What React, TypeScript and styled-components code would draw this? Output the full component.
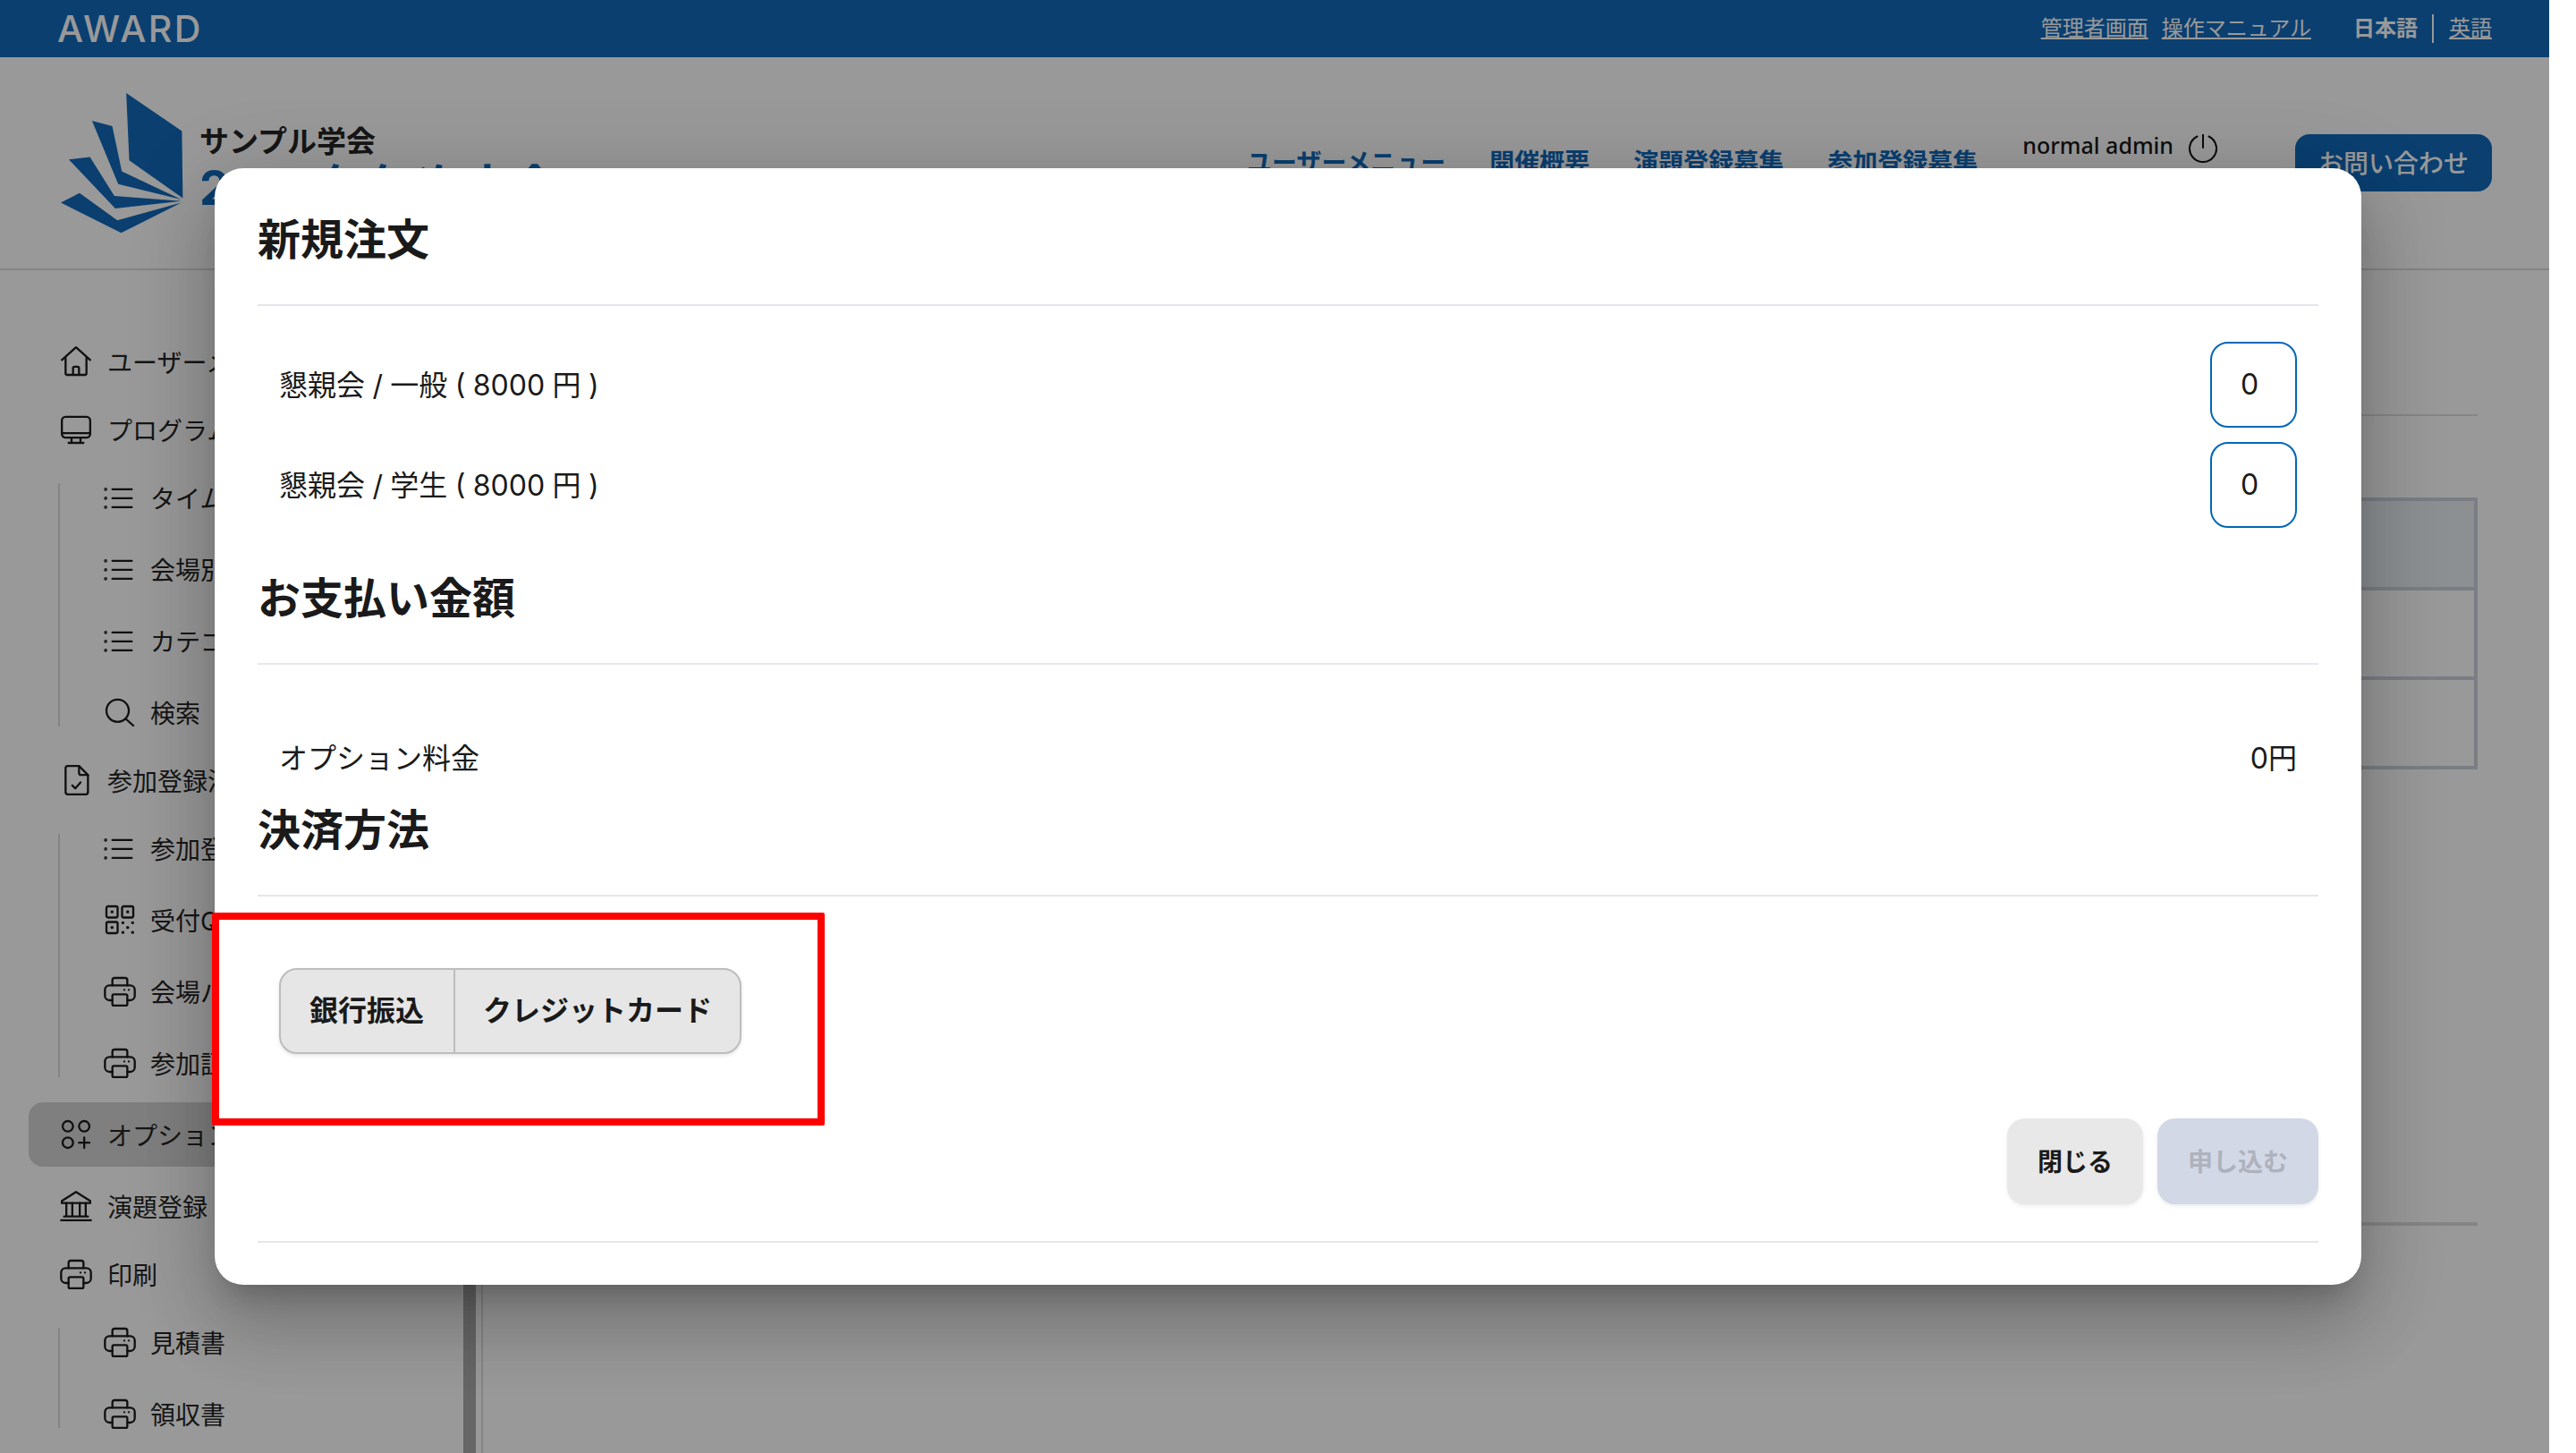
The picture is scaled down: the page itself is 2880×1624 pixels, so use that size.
import styled, { createGlobalStyle } from 'styled-components';

const FONT = `"Inter", "Noto Sans CJK JP", sans-serif`;
const BLUE = '#1169bb';
const INK = '#262626';

const GlobalStyle = createGlobalStyle`
  html, body {
    margin: 0;
    padding: 0;
    background: #fff;
    overflow: hidden;
  }
  * { box-sizing: border-box; }
`;

const Page = styled.div`
  position: relative;
  width: 2850px;
  height: 1624px;
  overflow: hidden;
  background: #fff;
  color: ${INK};
  font-family: ${FONT};
  display: flex;
  flex-direction: column;
`;

const TopBar = styled.div`
  height: 64px;
  background: ${BLUE};
  display: flex;
  align-items: center;
  padding: 0 64px;
  color: #fff;
  flex-shrink: 0;
`;

const Brand = styled.div`
  font-family: "Inter", sans-serif;
  font-size: 41px;
  line-height: 1;
  font-weight: 500;
  letter-spacing: 2.5px;
`;

const TopLinks = styled.div`
  margin-left: auto;
  display: flex;
  align-items: center;
  font-size: 24px;
  line-height: 32px;
`;

const TopLink = styled.a`
  color: #fff;
  text-decoration: underline;
  margin-right: 15px;
  &:last-child { margin-right: 0; }
`;

const LangGroup = styled.div`
  display: flex;
  align-items: center;
  margin-left: 32px;
`;

const LangCurrent = styled.span`
  font-weight: 700;
  padding-right: 16px;
  border-right: 2px solid #fff;
  margin-right: 17px;
`;

const SiteHeader = styled.header`
  height: 238px;
  flex-shrink: 0;
  display: flex;
  padding: 0 64px 0 66px;
  border-bottom: 2px solid #dcdcdc;
`;

const LogoMark = styled.svg`
  width: 142px;
  height: 163px;
  margin-top: 36px;
  flex-shrink: 0;
`;

const SiteTitle = styled.div`
  margin: 74px 0 0 15px;
  display: flex;
  flex-direction: column;
`;

const SiteOrg = styled.div`
  font-size: 33px;
  line-height: 40px;
  font-weight: 700;
`;

const SiteEvent = styled.div`
  font-size: 53px;
  line-height: 64px;
  font-weight: 700;
  color: ${BLUE};
  white-space: nowrap;
`;

const HeaderRight = styled.div`
  margin-left: auto;
  display: flex;
  align-items: flex-start;
  padding-top: 86px;
`;

const MainNav = styled.nav`
  display: flex;
  gap: 49px;
  margin: 16px 50px 0 0;
`;

const NavLink = styled.a`
  font-size: 28px;
  line-height: 32px;
  font-weight: 700;
  color: ${BLUE};
`;

const UserBox = styled.div`
  display: flex;
  align-items: center;
  gap: 16px;
  margin-right: 86px;
  height: 32px;
`;

const UserName = styled.span`
  font-family: "Noto Sans", sans-serif;
  font-size: 25px;
  line-height: 32px;
  font-weight: 500;
  color: #1a1a1a;
  padding-bottom: 8px;
`;

const PowerIcon = styled.svg`
  width: 34px;
  height: 32px;
`;

const ContactButton = styled.button`
  width: 220px;
  height: 64px;
  border: none;
  border-radius: 16px;
  background: ${BLUE};
  color: #fff;
  font-family: ${FONT};
  font-size: 28px;
  font-weight: 500;
  padding: 0 0 3px;
`;

const Body = styled.div`
  flex: 1;
  display: flex;
  min-height: 0;
`;

const Sidebar = styled.aside`
  width: 540px;
  flex-shrink: 0;
  display: flex;
  border-right: 2px solid #dedede;
  padding-right: 6px;
`;

const SideNav = styled.nav`
  flex: 1;
  display: flex;
  flex-direction: column;
  padding: 66px 0 0 32px;
`;

const Thumb = styled.div`
  width: 14px;
  background: #aaa;
  flex-shrink: 0;
`;

const SideItem = styled.div<{ $open?: boolean; $active?: boolean }>`
  height: 72px;
  flex-shrink: 0;
  display: flex;
  align-items: center;
  gap: 15px;
  padding-left: 33px;
  margin-right: ${({ $active }) => ($active ? '-40px' : '0')};
  margin-top: ${({ $active }) => ($active ? '4px' : '0')};
  margin-bottom: ${({ $open, $active }) => ($open ? '0' : $active ? '8px' : '4px')};
  border-radius: 16px;
  background: ${({ $active }) => ($active ? '#d4d4d4' : 'transparent')};
  font-size: 28px;
  white-space: nowrap;
`;

const SubList = styled.div`
  position: relative;
  display: flex;
  flex-direction: column;
  flex-shrink: 0;
  &::before {
    content: '';
    position: absolute;
    left: 33px;
    top: 24px;
    bottom: 24px;
    width: 2px;
    background: #dcdcdc;
  }
`;

const SubItem = styled.div`
  height: 80px;
  display: flex;
  align-items: center;
  gap: 14px;
  padding-left: 82px;
  font-size: 28px;
  white-space: nowrap;
`;

const Glyph = styled.svg.attrs({ viewBox: '0 0 24 24', fill: 'none', stroke: 'currentColor', strokeWidth: 1.4, strokeLinecap: 'round', strokeLinejoin: 'round' })`
  width: 40px;
  height: 40px;
  flex-shrink: 0;
  color: #1c1c1c;
`;

const Main = styled.main`
  flex: 1;
  display: flex;
  flex-direction: column;
  padding: 161px 80px 0 40px;
`;

const MainRule = styled.div`
  height: 2px;
  background: #dfdfdf;
`;

const InfoTable = styled.div`
  margin-top: 91px;
  height: 304px;
  border: 4px solid #cbd3dd;
  display: flex;
  flex-direction: column;
`;

const TableRow = styled.div<{ $head?: boolean }>`
  flex: 1;
  background: ${({ $head }) => ($head ? '#e9f0f5' : 'transparent')};
  border-bottom: 4px solid #cbd3dd;
  &:last-child { border-bottom: none; }
`;

const LowerRule = styled.div`
  margin-top: 506px;
  height: 4px;
  background: #dedede;
`;

const Overlay = styled.div`
  position: absolute;
  inset: 0;
  background: rgba(0, 0, 0, 0.4);
  padding: 188px 0 0 240px;
`;

const Dialog = styled.div`
  position: relative;
  width: 2400px;
  height: 1248px;
  padding: 44px 48px 0;
  background: #fff;
  border-radius: 32px;
  box-shadow: 0 22px 30px -14px rgba(0, 0, 0, 0.2), 0 48px 76px 6px rgba(0, 0, 0, 0.14), 0 18px 92px 16px rgba(0, 0, 0, 0.12);
  color: #1a1a1a;
  display: flex;
  flex-direction: column;
`;

const SectionTitle = styled.h2`
  margin: 0;
  font-size: 48px;
  line-height: 71px;
  font-weight: 700;
  padding-bottom: 37px;
  border-bottom: 2px solid #e6e6ec;
  color: #1a1a1a;
`;

const ItemList = styled.div`
  display: flex;
  flex-direction: column;
  gap: 16px;
  padding: 40px 24px 43px;
`;

const ItemRow = styled.div`
  display: flex;
  align-items: center;
  justify-content: space-between;
  font-size: 32px;
`;

const ItemLabel = styled.span`
  padding-bottom: 4px;
  word-spacing: -0.6px;
`;

const QtyInput = styled.input`
  width: 97px;
  height: 96px;
  padding: 0 0 2px 32px;
  border: 2px solid #0068b7;
  border-radius: 20px;
  background: #fff;
  font-family: ${FONT};
  font-size: 32px;
  color: #1a1a1a;
  outline: none;
`;

const TotalRow = styled.div`
  display: flex;
  justify-content: space-between;
  font-size: 32px;
  line-height: 48px;
  padding: 81px 24px 20px;
`;

const PayBlock = styled.div`
  padding: 80px 24px 0;
`;

const PayGroup = styled.div`
  display: inline-flex;
  height: 96px;
  border: 2px solid #bdbdbd;
  border-radius: 20px;
  background: #e6e6e6;
  box-shadow: 0 2px 4px rgba(0, 0, 0, 0.1);
`;

const PayOption = styled.button`
  border: none;
  background: none;
  padding: 0 33px 7px 32px;
  font-family: ${FONT};
  font-size: 32px;
  font-weight: 700;
  color: #1a1a1a;
  border-right: 2px solid #bdbdbd;
  &:last-child { border-right: none; padding: 0 31px 7px; }
`;

const Actions = styled.div`
  display: flex;
  justify-content: flex-end;
  gap: 16px;
  margin-top: 72px;
  padding-bottom: 41px;
  border-bottom: 2px solid #e6e6ec;
`;

const ActionButton = styled.button<{ $disabled?: boolean }>`
  height: 96px;
  padding: 0 34px 3px;
  border: none;
  border-radius: 20px;
  background: ${({ $disabled }) => ($disabled ? '#d3d8e7' : '#e8e8e8')};
  color: ${({ $disabled }) => ($disabled ? '#aeb2bd' : '#1a1a1a')};
  font-family: ${FONT};
  font-size: 28px;
  font-weight: 700;
  box-shadow: 0 2px 4px rgba(0, 0, 0, 0.08);
`;

const RedFrame = styled.div`
  position: absolute;
  left: -3px;
  top: 832px;
  width: 685px;
  height: 238px;
  border: 8px solid #ff0000;
  border-radius: 2px;
  pointer-events: none;
`;

const HomeIcon = () => (
  <Glyph>
    <path d="M2.500 11 12 2.500l9.500 8.500" />
    <path d="M5 9.500V20a1 1 0 0 0 1 1h12a1 1 0 0 0 1-1V9.500" />
    <path d="M10 21v-4.500a1 1 0 0 1 1-1h2a1 1 0 0 1 1 1V21" />
  </Glyph>
);

const MonitorIcon = () => (
  <Glyph>
    <rect x="2.500" y="3.500" width="19" height="14" rx="2.500" />
    <path d="M2.500 14.500h19M9 17.500V21M15 17.500V21M7 21h10" />
  </Glyph>
);

const ListIcon = () => (
  <Glyph>
    <path d="M7 6.500h13M7 12.500h13M7 18.500h13" />
    <circle cx="2.500" cy="6.500" r=".4" />
    <circle cx="2.500" cy="12.500" r=".4" />
    <circle cx="2.500" cy="18.500" r=".4" />
  </Glyph>
);

const SearchIcon = () => (
  <Glyph>
    <circle cx="10.500" cy="11" r="7.500" />
    <path d="m16 16.500 5 4.500" />
  </Glyph>
);

const FileCheckIcon = () => (
  <Glyph>
    <path d="M6.500 2.500H14l6 6V20a1.500 1.500 0 0 1-1.500 1.500h-12A1.500 1.500 0 0 1 5 20V4a1.500 1.500 0 0 1 1.500-1.500z" />
    <path d="M14 2.500V7a1.500 1.500 0 0 0 1.500 1.500H20" />
    <path d="m9.500 15.500 2 2 3.500-4" />
  </Glyph>
);

const QrIcon = () => (
  <Glyph>
    <rect x="3" y="3" width="7.500" height="7.500" rx="1" />
    <rect x="13.500" y="3" width="7.500" height="7.500" rx="1" />
    <rect x="3" y="13.500" width="7.500" height="7.500" rx="1" />
    <path d="M6.700 6.700h.1M17.200 6.700h.1M6.700 17.200h.1M14 14h.1M20.500 14h.1M17.200 17.200h.1M14 20.500h.1M20.500 20.500h.1" strokeWidth="2" />
  </Glyph>
);

const PrinterIcon = () => (
  <Glyph>
    <path d="M7 8V4.500A1.500 1.500 0 0 1 8.500 3h7A1.500 1.500 0 0 1 17 4.500V8" />
    <path d="M7 18H5a3 3 0 0 1-3-3v-4a3 3 0 0 1 3-3h14a3 3 0 0 1 3 3v4a3 3 0 0 1-3 3h-2" />
    <rect x="7" y="14" width="10" height="7.500" rx="1" />
    <path d="M15 11h.01M18 11h.01" />
  </Glyph>
);

const OptionsIcon = () => (
  <Glyph>
    <circle cx="6.500" cy="6.500" r="3.500" />
    <circle cx="17.500" cy="6.500" r="3.500" />
    <circle cx="6.500" cy="17.500" r="3.500" />
    <path d="M17.500 14v7M14 17.500h7" />
  </Glyph>
);

const BankIcon = () => (
  <Glyph>
    <path d="M12 2.500 2.500 8.500V10h19V8.500z" />
    <path d="M5.500 10v9M9.500 10v9M14.500 10v9M18.500 10v9M4 19h16M2 21.500h20" />
  </Glyph>
);

export default function App() {
  return (
    <Page>
      <GlobalStyle />
      <TopBar>
        <Brand>AWARD</Brand>
        <TopLinks>
          <TopLink>管理者画面</TopLink>
          <TopLink>操作マニュアル</TopLink>
          <LangGroup>
            <LangCurrent>日本語</LangCurrent>
            <TopLink>英語</TopLink>
          </LangGroup>
        </TopLinks>
      </TopBar>

      <SiteHeader>
        <LogoMark viewBox="80 60 425 490" fill="#1169bb">
          <polygon points="305,72 492,200 495,425 315,298" />
          <polygon points="190,165 258,183 290,335 490,430 278,378" />
          <polygon points="112,295 183,287 265,418 490,435 268,460" />
          <polygon points="85,440 148,408 275,500 490,440 288,542" />
        </LogoMark>
        <SiteTitle>
          <SiteOrg>サンプル学会</SiteOrg>
          <SiteEvent>2025年年次大会</SiteEvent>
        </SiteTitle>
        <HeaderRight>
          <MainNav>
            <NavLink>ユーザーメニュー</NavLink>
            <NavLink>開催概要</NavLink>
            <NavLink>演題登録募集</NavLink>
            <NavLink>参加登録募集</NavLink>
          </MainNav>
          <UserBox>
            <UserName>normal admin</UserName>
            <PowerIcon viewBox="0 0 34 32" fill="none" stroke="#111" strokeWidth="2" strokeLinecap="round">
              <path d="M10.500 2.500a15 15 0 1 0 13 0" />
              <path d="M17 .5V15" />
            </PowerIcon>
          </UserBox>
          <ContactButton>お問い合わせ</ContactButton>
        </HeaderRight>
      </SiteHeader>

      <Body>
        <Sidebar>
          <SideNav>
            <SideItem><HomeIcon />ユーザーメニュー</SideItem>
            <SideItem $open><MonitorIcon />プログラム</SideItem>
            <SubList>
              <SubItem><ListIcon />タイムテーブル</SubItem>
              <SubItem><ListIcon />会場別</SubItem>
              <SubItem><ListIcon />カテゴリー別</SubItem>
              <SubItem><SearchIcon />検索</SubItem>
            </SubList>
            <SideItem $open><FileCheckIcon />参加登録決済</SideItem>
            <SubList>
              <SubItem><ListIcon />参加登録</SubItem>
              <SubItem><QrIcon />受付QRコード</SubItem>
              <SubItem><PrinterIcon />会場パス</SubItem>
              <SubItem><PrinterIcon />参加証明書</SubItem>
            </SubList>
            <SideItem $active><OptionsIcon />オプション</SideItem>
            <SideItem><BankIcon />演題登録</SideItem>
            <SideItem $open><PrinterIcon />印刷</SideItem>
            <SubList>
              <SubItem><PrinterIcon />見積書</SubItem>
              <SubItem><PrinterIcon />領収書</SubItem>
            </SubList>
          </SideNav>
          <Thumb />
        </Sidebar>
        <Main>
          <MainRule />
          <InfoTable>
            <TableRow $head />
            <TableRow />
            <TableRow />
          </InfoTable>
          <LowerRule />
        </Main>
      </Body>

      <Overlay>
        <Dialog>
          <SectionTitle>新規注文</SectionTitle>
          <ItemList>
            <ItemRow>
              <ItemLabel>懇親会 / 一般 ( 8000 円 )</ItemLabel>
              <QtyInput value="0" readOnly />
            </ItemRow>
            <ItemRow>
              <ItemLabel>懇親会 / 学生 ( 8000 円 )</ItemLabel>
              <QtyInput value="0" readOnly />
            </ItemRow>
          </ItemList>
          <SectionTitle>お支払い金額</SectionTitle>
          <TotalRow>
            <span>オプション料金</span>
            <span>0円</span>
          </TotalRow>
          <SectionTitle>決済方法</SectionTitle>
          <PayBlock>
            <PayGroup>
              <PayOption>銀行振込</PayOption>
              <PayOption>クレジットカード</PayOption>
            </PayGroup>
          </PayBlock>
          <Actions>
            <ActionButton>閉じる</ActionButton>
            <ActionButton $disabled>申し込む</ActionButton>
          </Actions>
          <RedFrame />
        </Dialog>
      </Overlay>
    </Page>
  );
}
